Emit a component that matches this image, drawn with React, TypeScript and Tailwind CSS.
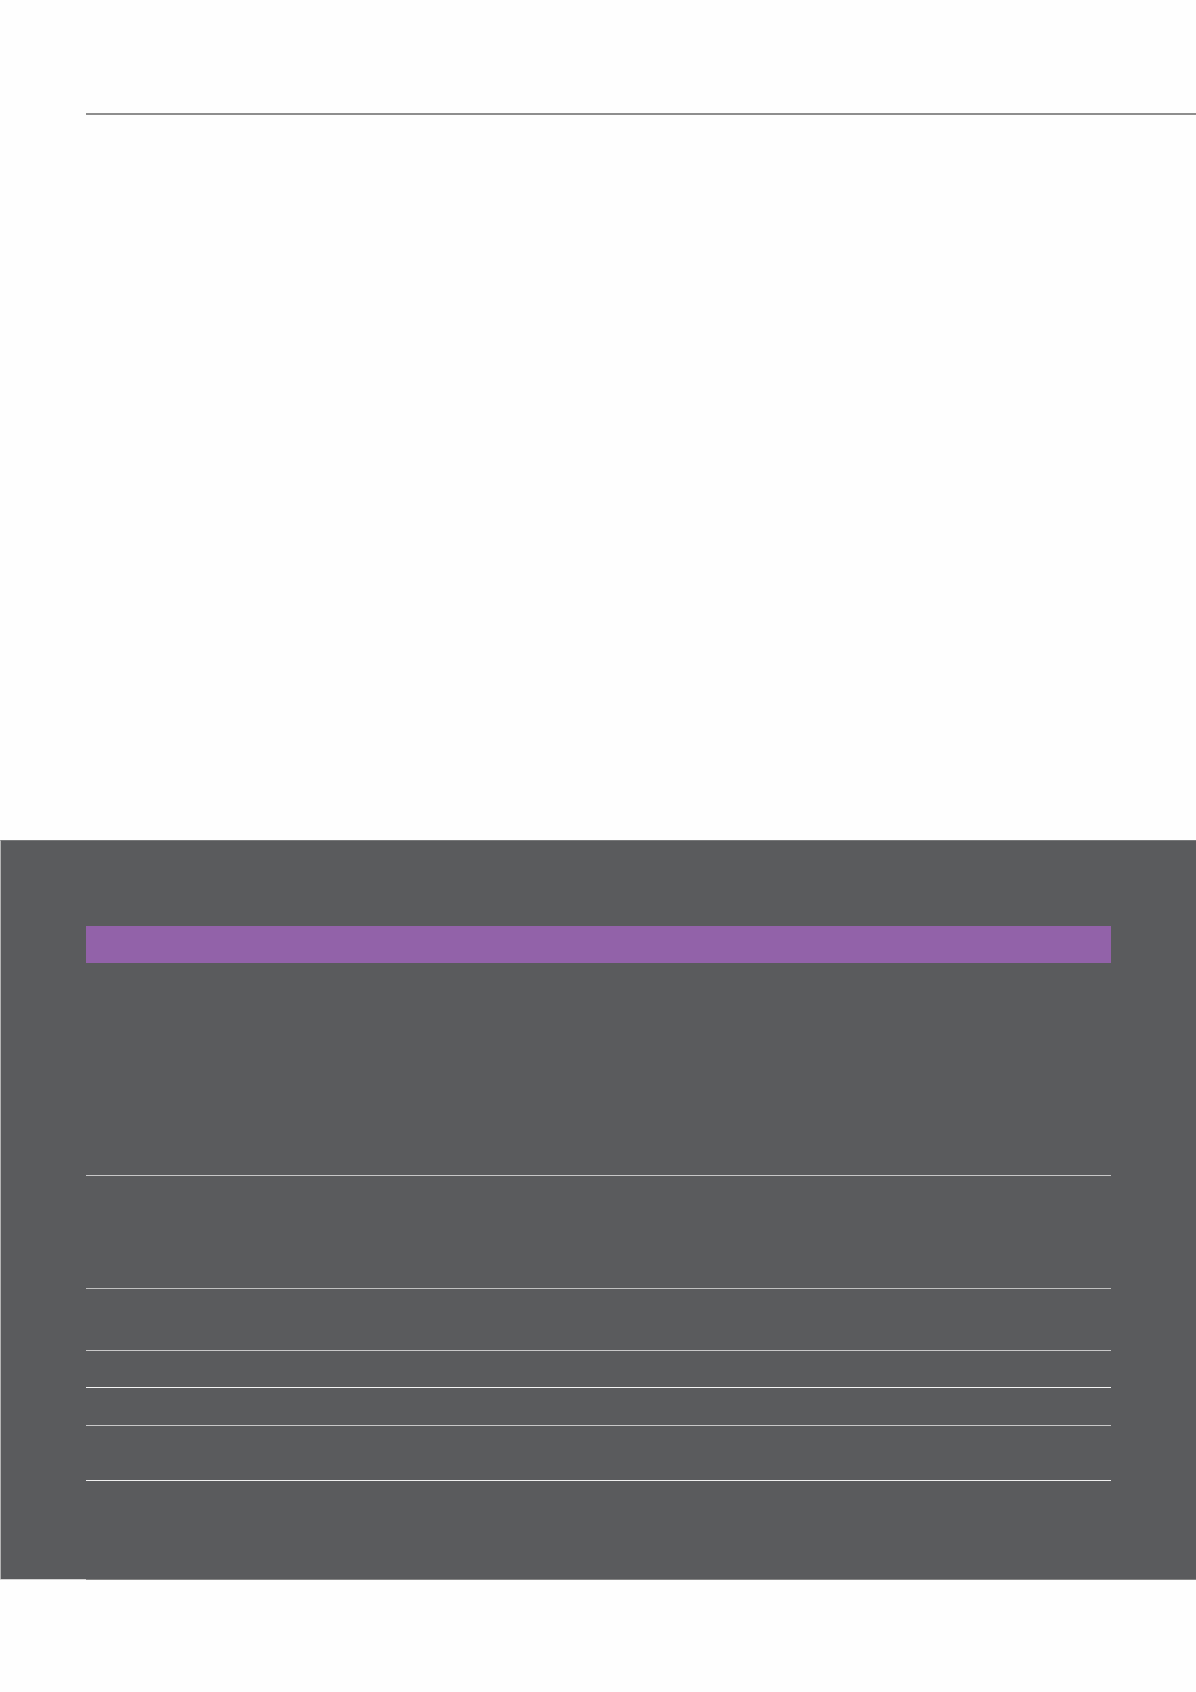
export default function App() {
  const rows = [
    { gap: "mt-[212px]", color: "bg-[#c8c8c8]" },
    { gap: "mt-[112px]", color: "bg-[#c0c0c0]" },
    { gap: "mt-[61px]", color: "bg-[#c8c8c8]" },
    { gap: "mt-[36px]", color: "bg-[#f4f4f4]" },
    { gap: "mt-[37px]", color: "bg-[#c8c8c8]" },
    { gap: "mt-[54px]", color: "bg-[#f0f0f0]" },
  ];
  return (
    <div className="w-[1196px] h-[1692px] bg-[#fefefe] flex flex-col font-['Liberation_Sans',sans-serif]">
      {/* top rule */}
      <div className="mt-[113px] ml-[86px] h-[2px] bg-[#8e8e8e]" />

      {/* dark table panel */}
      <div className="mt-[725px] h-[739px] bg-[#5a5b5d] border-l border-l-[#b4b4b4] border-t border-t-[#777879] flex flex-col pl-[85px] pr-[85px]">
        <div className="mt-[85px] h-[37px] bg-[#9262a9]" />
        {rows.map((r, i) => (
          <div key={i} className={`${r.gap} h-px ${r.color}`} />
        ))}
      </div>
      <div className="flex h-px">
        <div className="w-[86px] bg-[#d4d4d4]" />
        <div className="flex-1 bg-[#858585]" />
      </div>
    </div>
  );
}
